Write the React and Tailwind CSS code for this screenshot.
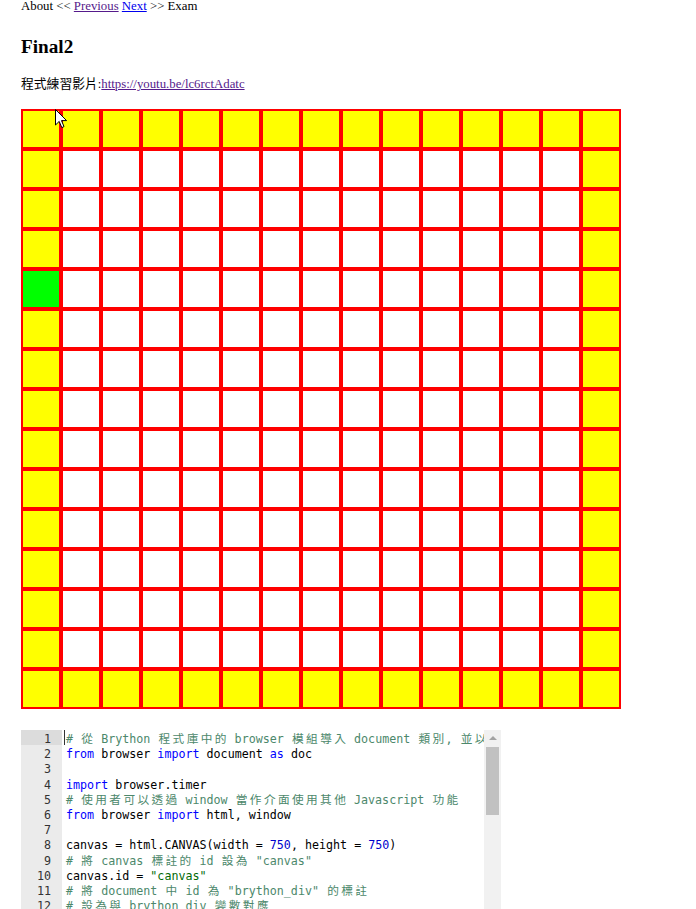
const N = 15;

const code = [
  [["# 從 Brython 程式庫中的 browser 模組導入 document 類別, 並以簡寫 doc 設定", "c"]],
  [["from", "k"], [" browser ", ""], ["import", "k"], [" document ", ""], ["as", "k"], [" doc", ""]],
  [],
  [["import", "k"], [" browser.timer", ""]],
  [["# 使用者可以透過 window 當作介面使用其他 Javascript 功能", "c"]],
  [["from", "k"], [" browser ", ""], ["import", "k"], [" html, window", ""]],
  [],
  [["canvas = html.CANVAS(width = ", ""], ["750", "n"], [", height = ", ""], ["750", "n"], [")", ""]],
  [["# 將 canvas 標註的 id 設為 \"canvas\"", "c"]],
  [["canvas.id = ", ""], ["\"canvas\"", "s"]],
  [["# 將 document 中 id 為 \"brython_div\" 的標註", "c"]],
  [["# 設為與 brython_div 變數對應", "c"]],
  [["brython_div = doc[\"brython_div\"]", ""]],
];

const tokenColor = {
  "": "text-black",
  c: "text-[#4c886b]",
  k: "text-[#0000ff]",
  n: "text-[#0000cd]",
  s: "text-[#036a07]",
};

// wide chars take two columns, like the editor does
function Wide({ text }) {
  return text.split(/([\u3000-\u9fff\uff00-\uffef])/).map((part, i) =>
    i % 2 === 1 ? (
      <span key={i} className="inline-block w-[2ch] text-center">
        {part}
      </span>
    ) : (
      part
    )
  );
}

function Grid() {
  const cells = [];
  for (let r = 0; r < N; r++) {
    for (let c = 0; c < N; c++) {
      const edge = r === 0 || c === 0 || r === N - 1 || c === N - 1;
      let fill = edge ? "#ffff00" : "#ffffff";
      if (r === 4 && c === 0) fill = "#00ff00";
      cells.push(<rect key={`${r}-${c}`} x={c * 50} y={r * 50} width="50" height="50" fill={fill} />);
    }
  }
  const lines = [];
  for (let i = 0; i <= N; i++) {
    lines.push(<line key={`v${i}`} x1={i * 50} y1="0" x2={i * 50} y2="750" stroke="#ff0000" strokeWidth="5" />);
    lines.push(<line key={`h${i}`} x1="0" y1={i * 50} x2="750" y2={i * 50} stroke="#ff0000" strokeWidth="5" />);
  }
  return (
    <svg width="600" height="600" viewBox="0 0 750 750" className="block">
      {cells}
      {lines}
    </svg>
  );
}

function Editor() {
  return (
    <div className="flex w-[480px] h-[200px] overflow-hidden bg-white font-['DejaVu_Sans_Mono','Noto_Sans_CJK_TC',monospace] text-[11.68px]">
      {/* gutter */}
      <div className="w-[41px] shrink-0 bg-[#ebebeb] text-[#333]">
        {code.map((_, i) => (
          <div
            key={i}
            className={`h-[15.2px] pt-[2px] leading-[15.2px] pr-[11px] text-right ${i === 0 ? "bg-[#dcdcdc]" : ""}`}
          >
            {i + 1}
          </div>
        ))}
      </div>
      {/* text */}
      <div className="relative flex-1 overflow-hidden pl-[4px]">
        <div className="absolute left-[2px] top-0 w-px h-[15px] bg-[#333]" />
        {code.map((line, i) => (
          <div key={i} className="h-[15.2px] pt-[2px] leading-[15.2px] whitespace-pre">
            {line.map(([t, k], j) => (
              <span key={j} className={tokenColor[k]}>
                <Wide text={t} />
              </span>
            ))}
          </div>
        ))}
      </div>
      {/* scrollbar */}
      <div className="w-[17px] shrink-0 bg-[#f1f1f1] flex flex-col items-center">
        <div className="mt-[6px] w-0 h-0 border-l-[4px] border-r-[4px] border-b-[4px] border-l-transparent border-r-transparent border-b-[#a3a3a3]" />
        <div className="mt-[7px] w-[13px] h-[68px] bg-[#c1c1c1]" />
      </div>
    </div>
  );
}

export default function App() {
  return (
    <div className="relative min-h-[909px] bg-white px-[21px] font-['Liberation_Serif','Noto_Sans_CJK_TC',serif] text-[12.8px] text-black">
      <div className="-mt-[1.3px] h-[14px] leading-[14px] whitespace-nowrap">
        About &lt;&lt; <a href="#" className="underline text-[#551a8b]">Previous</a>{" "}
        <a href="#" className="underline text-[#0000ee]">Next</a> &gt;&gt; Exam
      </div>
      <h2 className="mt-[23.5px] h-[22px] leading-[22px] text-[19.2px] font-bold">Final2</h2>
      <p className="mt-[17.5px] h-[14px] leading-[14px] whitespace-nowrap">
        <span className="font-['Noto_Sans_CJK_TC',sans-serif]">程式練習影片</span>:
        <a href="#" className="underline text-[#551a8b]">https://youtu.be/lc6rctAdatc</a>
      </p>
      <div className="mt-[19.3px]">
        <Grid />
      </div>
      <div className="mt-[21px]">
        <Editor />
      </div>

      {/* mouse pointer */}
      <svg className="absolute left-[55px] top-[110px]" width="13" height="20" viewBox="0 0 13 20">
        <path d="M0.5 0.5 L0.5 16 L4.2 12.4 L6.8 18.6 L9 17.6 L6.5 11.6 L11.6 11.6 Z" fill="#fff" stroke="#000" strokeWidth="1" strokeLinejoin="round" />
      </svg>
    </div>
  );
}
